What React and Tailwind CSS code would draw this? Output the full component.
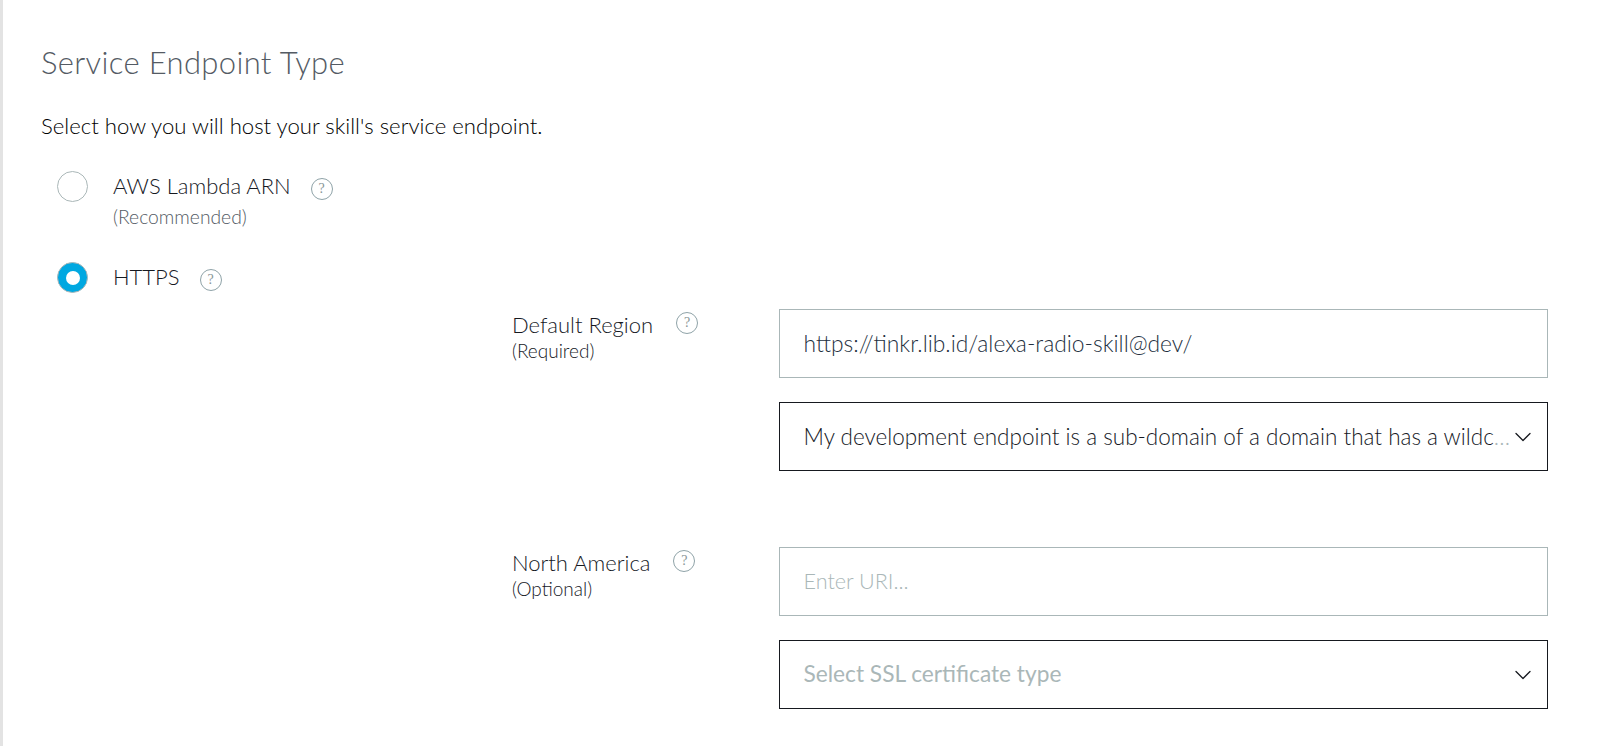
import React from 'react';
import { ChevronDown } from 'lucide-react';

const HelpIcon = ({ className = '' }) => (
    <span className={`flex items-center justify-center w-[22px] h-[22px] rounded-full border border-[#8fa3a8] text-[14px] leading-none text-[#879596] font-['Liberation_Serif',serif] ${className}`}>
        ?
    </span>
);

const Radio = ({ checked }) => (
    checked ? (
        <span className="flex items-center justify-center w-[31px] h-[31px] rounded-full bg-[#00a8e1] border-[1.5px] border-[#aab7b8]">
            <span className="w-[14px] h-[14px] rounded-full bg-white" />
        </span>
    ) : (
        <span className="block w-[31px] h-[31px] rounded-full border-[1.5px] border-[#aab7b8] bg-white" />
    )
);

const SelectBox = ({ children, muted }) => (
    <div className={`flex items-center justify-between h-[69px] pl-[23.5px] pr-[10px] border-[1.5px] border-[#16191f] ${muted ? 'text-[22.7px] text-[#aab7b8] font-normal' : 'text-[22.5px] text-[#16191f]'}`}>
        {children}
        <ChevronDown className="w-[28px] h-[28px] -ml-[8px] text-[#16191f] shrink-0" strokeWidth={1.1} />
    </div>
);

const RegionRow = ({ name, hint, children }) => (
    <div className="grid grid-cols-[267px_769px] ml-[512px]">
        <div>
            <div className="flex items-center text-[22px] leading-[32px] text-[#16191f]">
                <span className="mr-[21px]">{name}</span>
                <HelpIcon className="-mt-[5px] ml-[2px]" />
            </div>
            <div className="text-[19px] leading-[20px] text-[#16191f]">{hint}</div>
        </div>
        <div className="flex flex-col gap-[24px]">{children}</div>
    </div>
);

const App = () => {
    return (
        <div className="h-[746px] w-[1600px] overflow-hidden bg-white border-l-[3px] border-[#e3e3e3] pl-[38px] pt-[40px] font-['Lato',sans-serif] font-light">
            <h2 className="text-[31px] leading-[44px] text-[#545b64] font-light tracking-[0.35px]">Service Endpoint Type</h2>
            <p className="mt-[26px] text-[22.15px] leading-[32px] text-black font-light">Select how you will host your skill's service endpoint.</p>

            <div className="mt-[29px] ml-[16px] flex items-start">
                <Radio />
                <div className="ml-[25px]">
                    <div className="flex items-center text-[22px] leading-[30px] text-[#16191f]">
                        AWS Lambda ARN
                        <HelpIcon className="ml-[20px] mt-[6px]" />
                    </div>
                    <div className="text-[19.3px] leading-[32px] text-[#545b64]">(Recommended)</div>
                </div>
            </div>

            <div className="mt-[29px] ml-[16px] flex items-start">
                <Radio checked />
                <div className="ml-[25px] flex items-center text-[22px] leading-[30px] text-[#16191f]">
                    HTTPS
                    <HelpIcon className="ml-[20px] mt-[6px]" />
                </div>
            </div>

            <div className="-ml-[41px] mt-[16px] flex flex-col gap-[76px]">
                <RegionRow name="Default Region" hint="(Required)">
                    <div className="flex items-center h-[69px] px-[23.5px] border-[1.5px] border-[#aab7b8] text-[22.8px] text-[#232f3e]">
                        https://tinkr.lib.id/alexa-radio-skill@dev/
                    </div>
                    <SelectBox>
                        <span className="whitespace-nowrap">
                            My development endpoint is a sub-domain of a domain that has a wildc<span className="text-[#aab7b8]">…</span>
                        </span>
                    </SelectBox>
                </RegionRow>
                <RegionRow name="North America" hint="(Optional)">
                    <div className="flex items-center h-[69px] px-[23.5px] border-[1.5px] border-[#aab7b8] text-[21.6px] text-[#aab7b8]">
                        Enter URI...
                    </div>
                    <SelectBox muted>Select SSL certificate type</SelectBox>
                </RegionRow>
            </div>
        </div>
    );
};

export default App;
